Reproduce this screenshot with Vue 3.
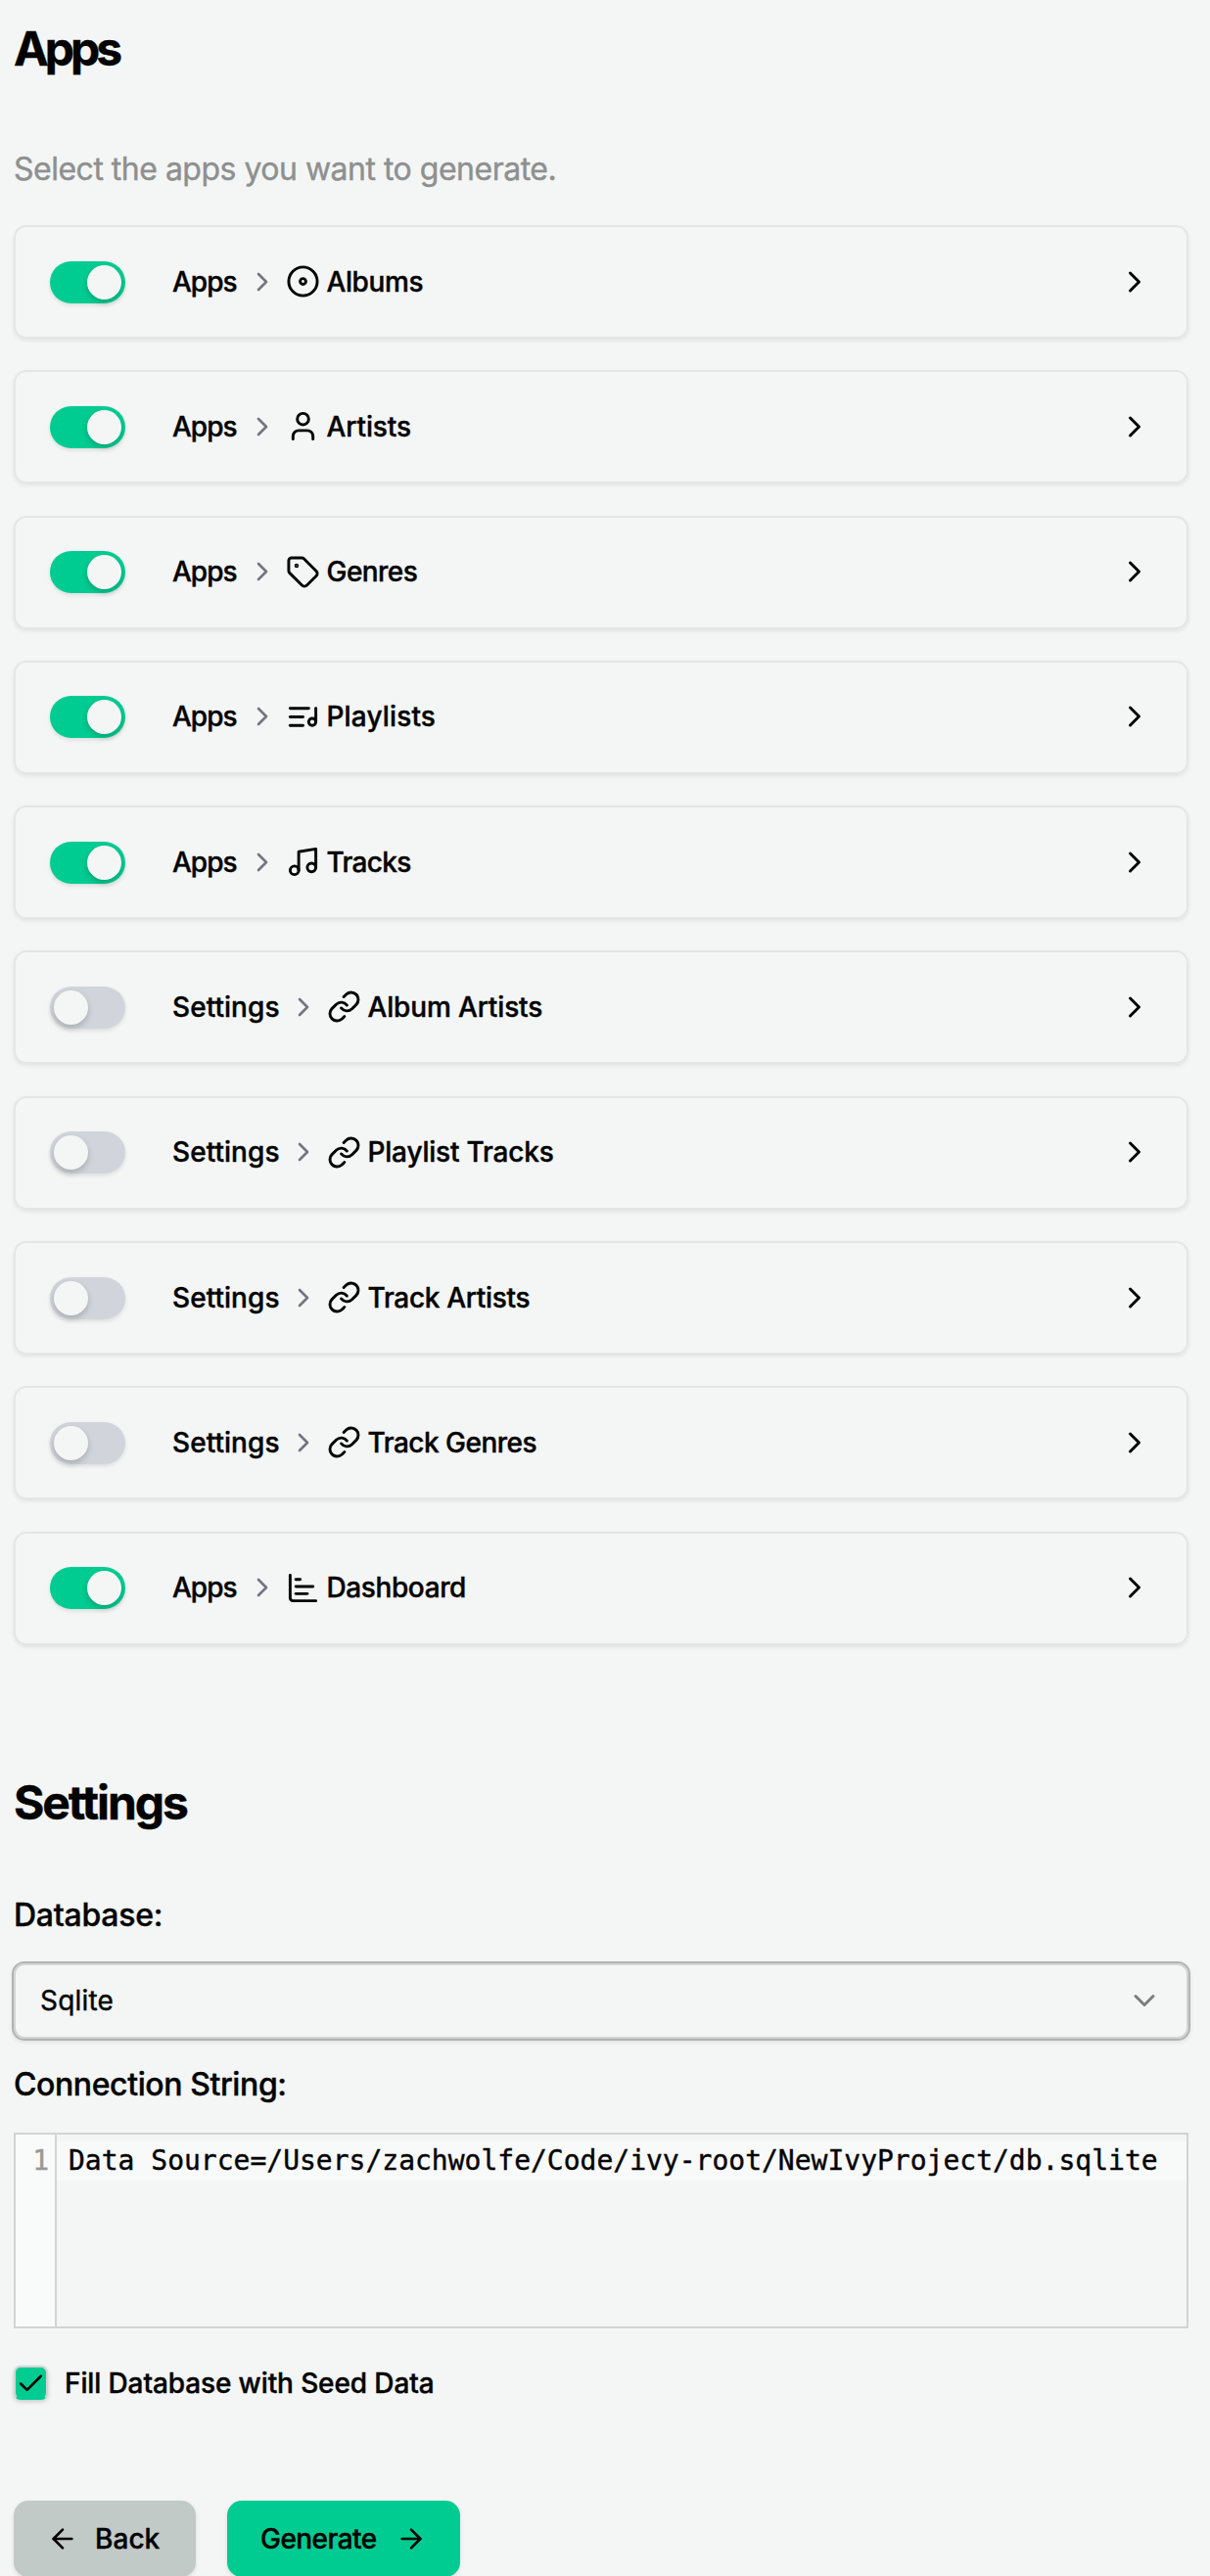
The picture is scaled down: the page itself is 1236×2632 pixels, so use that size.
<script setup>
import { ref } from 'vue'

const icons = {
  disc: '<circle cx="12" cy="12" r="10"/><circle cx="12" cy="12" r="2"/>',
  user: '<path d="M19 21v-2a4 4 0 0 0-4-4H9a4 4 0 0 0-4 4v2"/><circle cx="12" cy="7" r="4"/>',
  tag: '<path d="M12.586 2.586A2 2 0 0 0 11.172 2H4a2 2 0 0 0-2 2v7.172a2 2 0 0 0 .586 1.414l8.704 8.704a2.426 2.426 0 0 0 3.42 0l6.58-6.58a2.426 2.426 0 0 0 0-3.42z"/><circle cx="7.5" cy="7.5" r=".5" fill="currentColor"/>',
  playlist: '<path d="M21 15V6"/><path d="M18.5 18a2.5 2.5 0 1 0 0-5 2.5 2.5 0 0 0 0 5Z"/><path d="M12 12H3"/><path d="M16 6H3"/><path d="M12 18H3"/>',
  music: '<path d="M9 18V5l12-2v13"/><circle cx="6" cy="18" r="3"/><circle cx="18" cy="16" r="3"/>',
  link: '<path d="M10 13a5 5 0 0 0 7.54.54l3-3a5 5 0 0 0-7.07-7.07l-1.72 1.71"/><path d="M14 11a5 5 0 0 0-7.54-.54l-3 3a5 5 0 0 0 7.07 7.07l1.71-1.71"/>',
  chart: '<path d="M3 3v16a2 2 0 0 0 2 2h16"/><path d="M7 16h8"/><path d="M7 11h12"/><path d="M7 6h3"/>',
}

// tracking: letter spacing of the label, in px
const apps = ref([
  { group: 'Apps', name: 'Albums', icon: 'disc', on: true, tracking: -0.4 },
  { group: 'Apps', name: 'Artists', icon: 'user', on: true, tracking: -0.1 },
  { group: 'Apps', name: 'Genres', icon: 'tag', on: true, tracking: -0.55 },
  { group: 'Apps', name: 'Playlists', icon: 'playlist', on: true, tracking: 0.15 },
  { group: 'Apps', name: 'Tracks', icon: 'music', on: true, tracking: -0.65 },
  { group: 'Settings', name: 'Album Artists', icon: 'link', on: false, tracking: -0.15 },
  { group: 'Settings', name: 'Playlist Tracks', icon: 'link', on: false, tracking: -0.2 },
  { group: 'Settings', name: 'Track Artists', icon: 'link', on: false, tracking: -0.3 },
  { group: 'Settings', name: 'Track Genres', icon: 'link', on: false, tracking: -0.5 },
  { group: 'Apps', name: 'Dashboard', icon: 'chart', on: true, tracking: -0.4 },
])
const seed = ref(true)
</script>

<template>
  <main class="page">
    <h1 class="heading heading-apps">Apps</h1>
    <p class="hint">Select the apps you want to generate.</p>

    <ul class="cards">
      <li v-for="app in apps" :key="app.name" class="card">
        <button class="toggle" :class="{ on: app.on }" role="switch" :aria-checked="app.on" @click="app.on = !app.on">
          <span class="thumb"></span>
        </button>
        <div class="crumb">
          <span class="group" :class="{ wide: app.group === 'Settings' }">{{ app.group }}</span>
          <svg class="sep" viewBox="0 0 24 24"><path d="m9 18 6-6-6-6" /></svg>
          <svg class="icon" viewBox="0 0 24 24" v-html="icons[app.icon]"></svg>
          <span class="name" :style="{ letterSpacing: app.tracking + 'px' }">{{ app.name }}</span>
        </div>
        <svg class="open" viewBox="0 0 24 24"><path d="m9 18 6-6-6-6" /></svg>
      </li>
    </ul>

    <h1 class="heading heading-settings">Settings</h1>
    <div class="label label-db">Database:</div>
    <div class="select">
      <span class="select-value">Sqlite</span>
      <svg class="caret" viewBox="0 0 24 24"><path d="m6 9 6 6 6-6" /></svg>
    </div>
    <div class="label label-conn">Connection String:</div>
    <div class="editor">
      <div class="gutter">1</div>
      <div class="code"><div class="line">Data Source=/Users/zachwolfe/Code/ivy-root/NewIvyProject/db.sqlite</div></div>
    </div>

    <div class="check-row" @click="seed = !seed">
      <span class="box"><svg v-if="seed" viewBox="0 0 24 24"><path d="M20 6 9 17l-5-5" /></svg></span>
      <span class="check-label">Fill Database with Seed Data</span>
    </div>

    <div class="actions">
      <button class="btn back">
        <svg viewBox="0 0 24 24"><path d="m12 19-7-7 7-7" /><path d="M19 12H5" /></svg>
        <span>Back</span>
      </button>
      <button class="btn generate">
        <span>Generate</span>
        <svg viewBox="0 0 24 24"><path d="M5 12h14" /><path d="m12 5 7 7-7 7" /></svg>
      </button>
    </div>
  </main>
</template>

<style>
body {
  background: #f4f6f5;
}
</style>

<style scoped>
.page {
  box-sizing: border-box;
  height: 2632px;
  overflow: hidden;
  padding: 22px 22px 0 14px;
  background: #f4f6f5;
  color: #020202;
  font-family: Inter, "Liberation Sans", sans-serif;
  font-size: 28px;
  font-weight: 500;
  -webkit-text-stroke: 0.4px currentColor;
}
svg {
  display: block;
  flex: none;
  fill: none;
  stroke: currentColor;
  stroke-width: 2;
  stroke-linecap: round;
  stroke-linejoin: round;
}
button {
  border: 0;
  padding: 0;
  font: inherit;
  color: inherit;
}
.heading {
  margin: 0;
  font-size: 48px;
  font-weight: 700;
  line-height: 56px;
}
.heading-apps {
  letter-spacing: -4px;
}
.heading-settings {
  margin-top: 133px;
  letter-spacing: -2.1px;
}
.hint {
  margin: 75px 0 0;
  color: #8e908f;
  font-size: 32px;
  font-weight: 400;
  line-height: 40px;
  letter-spacing: -0.5px;
}
.cards {
  display: flex;
  flex-direction: column;
  gap: 32.3px;
  margin: 37px 0 0;
  padding: 0;
  list-style: none;
}
.card {
  box-sizing: border-box;
  display: flex;
  align-items: center;
  height: 116px;
  padding: 0 35px 0 35px;
  border: 2px solid #e4e6e5;
  border-radius: 13px;
  box-shadow: 0 2px 4px rgba(0, 0, 0, 0.08);
}
.toggle {
  box-sizing: border-box;
  flex: none;
  width: 77px;
  height: 43px;
  padding: 4px;
  border-radius: 22px;
  background: #d1d5db;
  box-shadow: 0 2px 4px rgba(0, 0, 0, 0.1);
}
.toggle.on {
  background: #00cc92;
}
.thumb {
  display: block;
  width: 35px;
  height: 35px;
  border-radius: 50%;
  background: #f4f6f5;
  box-shadow: 0 3px 6px rgba(0, 0, 0, 0.2);
}
.toggle.on .thumb {
  margin-left: 34px;
}
.crumb {
  display: flex;
  align-items: center;
  flex: 1;
  margin: -1px 0 0 48px;
  line-height: 40px;
  white-space: nowrap;
}
.group {
  width: 75.5px;
  letter-spacing: -1px;
}
.group.wide {
  width: 117.5px;
  letter-spacing: 0.05px;
}
.sep {
  width: 32px;
  height: 32px;
  color: #737680;
}
.icon {
  width: 35px;
  height: 35px;
  margin-left: 8px;
}
.name {
  margin-left: 7px;
}
.open {
  width: 36px;
  height: 36px;
  margin-top: -1px;
}
.label {
  font-size: 32px;
  line-height: 40px;
}
.label-db {
  margin-top: 67px;
  letter-spacing: -0.25px;
}
.label-conn {
  margin-top: 25px;
  letter-spacing: -0.4px;
}
.select {
  box-sizing: border-box;
  display: flex;
  align-items: center;
  justify-content: space-between;
  height: 81px;
  margin: 27px -2px 0;
  padding: 0 27px;
  border: 2px solid #b0b3b2;
  border-radius: 13px;
  box-shadow: inset 0 0 0 2px #d2d5d4, 0 2px 4px rgba(0, 0, 0, 0.08);
  font-weight: 400;
}
.select-value {
  letter-spacing: 0.2px;
}
.caret {
  width: 36px;
  height: 36px;
  color: #7b7d7c;
}
.editor {
  box-sizing: border-box;
  display: flex;
  height: 200px;
  margin-top: 29px;
  border: 2px solid #d2d4d3;
  font: 400 28px/40px "DejaVu Sans Mono", monospace;
}
.gutter {
  box-sizing: border-box;
  width: 42px;
  padding: 7px 6px 0 0;
  border-right: 2px solid #d2d4d3;
  background: #f9fafa;
  color: #999;
  text-align: right;
}
.code {
  flex: 1;
  padding-top: 7px;
}
.line {
  padding-left: 12px;
  background: #f8f9f9;
  white-space: pre;
}
.check-row {
  display: flex;
  align-items: center;
  height: 34px;
  margin-top: 39px;
}
.box {
  box-sizing: border-box;
  width: 35px;
  height: 35px;
  border: 2px solid #d2d5d4;
  border-bottom-color: #00cc92;
  border-radius: 7px;
  background: #00cc92;
  box-shadow: 0 2px 4px rgba(0, 0, 0, 0.18);
}
.box svg {
  width: 31px;
  height: 31px;
  margin-top: 1px;
}
.check-label {
  margin: 0 0 0 17px;
  line-height: 40px;
  letter-spacing: -0.12px;
}
.actions {
  display: flex;
  gap: 32px;
  margin-top: 103px;
}
.btn {
  display: flex;
  align-items: center;
  height: 78px;
  border-radius: 15px;
  box-shadow: 0 2px 4px rgba(0, 0, 0, 0.1);
}
.btn svg {
  width: 32px;
  height: 32px;
}
.back {
  width: 186px;
  padding-left: 34px;
  gap: 17px;
  background: #c2cac7;
  letter-spacing: 0.05px;
}
.generate {
  width: 238px;
  padding-left: 34px;
  gap: 19px;
  background: #00cc92;
  letter-spacing: -0.55px;
}
</style>
